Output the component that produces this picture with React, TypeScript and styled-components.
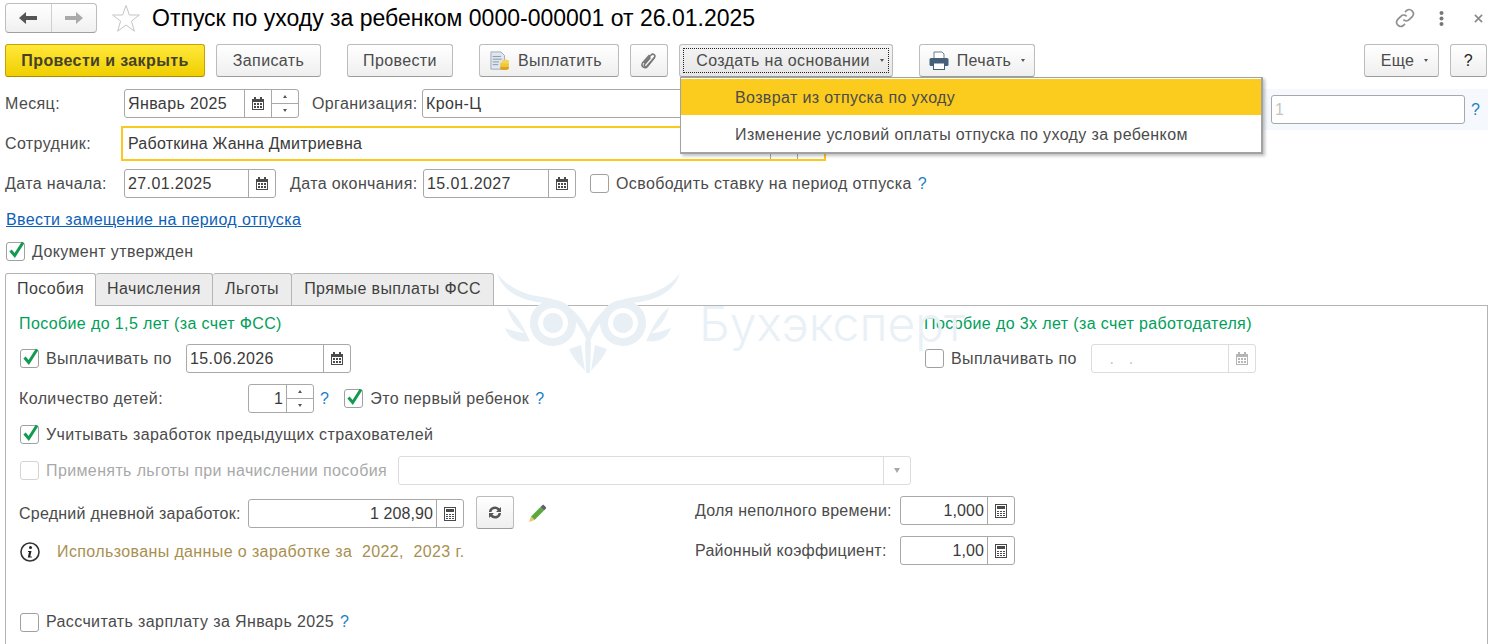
import React from "react";
import styled, { createGlobalStyle } from "styled-components";

const GlobalStyle = createGlobalStyle`
  html, body {
    margin: 0;
    padding: 0;
    background: #fff;
    overflow: hidden;
  }
  body {
    font-family: "Liberation Sans", Arial, sans-serif;
    font-size: 16px;
    letter-spacing: 0.38px;
    color: #4b4b4b;
  }
`;

const Page = styled.div`
  position: relative;
  width: 1494px;
  height: 644px;
  overflow: hidden;
  padding: 3px 6px 0 5px;
  box-sizing: border-box;
`;

const Header = styled.div`
  display: flex;
  align-items: center;
  height: 30px;
`;

const NavGroup = styled.div`
  display: flex;
  width: 92px;
  height: 30px;
  box-sizing: border-box;
  border: 1px solid #bdbdbd;
  border-bottom-color: #9f9f9f;
  border-radius: 4px;
  background: linear-gradient(#fff, #f0f0f0);
`;

const NavCell = styled.div<{ $divider?: boolean }>`
  flex: 1;
  display: flex;
  align-items: center;
  justify-content: center;
  border-right: ${(p) => (p.$divider ? "1px solid #cfcfcf" : "none")};
`;

const StarWrap = styled.div`
  display: flex;
  margin-left: 14px;
  width: 41px;
`;

const Title = styled.h1`
  margin: 0;
  font-size: 23px;
  font-weight: 400;
  letter-spacing: 0;
  color: #000;
  white-space: nowrap;
`;

const HeaderTools = styled.div`
  margin-left: auto;
  display: flex;
  align-items: center;
  gap: 24px;
  padding-right: 5px;
`;

const CloseIcon = styled.svg`
  margin-left: 6px;
`;

const Toolbar = styled.div`
  display: flex;
  margin-top: 11px;
  height: 33px;
`;

const Button = styled.div<{
  $w: number;
  $ml?: number;
  $pl?: number;
  $pr?: number;
  $primary?: boolean;
  $pressed?: boolean;
}>`
  position: relative;
  width: ${(p) => p.$w}px;
  margin-left: ${(p) => p.$ml ?? 0}px;
  padding: 0 ${(p) => p.$pr ?? 0}px 0 ${(p) => p.$pl ?? 0}px;
  height: 33px;
  box-sizing: border-box;
  display: flex;
  align-items: center;
  justify-content: center;
  gap: 8px;
  white-space: nowrap;
  border-radius: 3px;
  border: 1px solid ${(p) => (p.$primary ? "#c4a300" : "#bcbcbc")};
  border-bottom-color: ${(p) => (p.$primary ? "#a98e00" : "#9d9d9d")};
  background: ${(p) =>
    p.$primary
      ? "linear-gradient(#ffe83a, #f0cf00)"
      : p.$pressed
        ? "linear-gradient(#f4f4f4, #e6e6e6)"
        : "linear-gradient(#fff, #efefef)"};
  font-weight: ${(p) => (p.$primary ? 700 : 400)};
  color: ${(p) => (p.$primary ? "#45412a" : "#4b4b4b")};
`;

const HelpButton = styled(Button)`
  color: #222;
`;

const FocusFrame = styled.div`
  position: absolute;
  inset: 3px;
  border: 1px dotted #222;
`;

const Caret = styled.span<{ $ml?: number }>`
  width: 0;
  height: 0;
  margin-left: ${(p) => p.$ml ?? 0}px;
  border-left: 2.5px solid transparent;
  border-right: 2.5px solid transparent;
  border-top: 3px solid #555;
`;

const FadedCaret = styled.span`
  width: 0;
  height: 0;
  border-left: 3.5px solid transparent;
  border-right: 3.5px solid transparent;
  border-top: 5px solid #a8a8a8;
`;

const Row = styled.div<{ $h?: number; $mt?: number }>`
  display: flex;
  align-items: center;
  height: ${(p) => p.$h ?? 29}px;
  margin-top: ${(p) => p.$mt ?? 0}px;
  white-space: nowrap;
`;

const Label = styled.span<{
  $w?: number;
  $ml?: number;
  $disabled?: boolean;
  $tight?: boolean;
}>`
  flex: none;
  width: ${(p) => (p.$w ? `${p.$w}px` : "auto")};
  margin-left: ${(p) => p.$ml ?? 0}px;
  letter-spacing: ${(p) => (p.$tight ? "0.24px" : "inherit")};
  color: ${(p) => (p.$disabled ? "#a9a9a9" : "#4b4b4b")};
`;

const Field = styled.div<{ $w: number; $disabled?: boolean }>`
  flex: none;
  display: flex;
  width: ${(p) => p.$w}px;
  height: 29px;
  box-sizing: border-box;
  background: #fff;
  border: 1px solid ${(p) => (p.$disabled ? "#dcdcdc" : "#a8a8a8")};
  border-radius: 3px;
`;

const Value = styled.div<{ $right?: boolean; $muted?: boolean }>`
  flex: 1;
  min-width: 0;
  display: flex;
  align-items: center;
  justify-content: ${(p) => (p.$right ? "flex-end" : "flex-start")};
  padding: 0 3px;
  letter-spacing: ${(p) => (p.$right ? "0.1px" : "inherit")};
  color: ${(p) => (p.$muted ? "#c4c4c4" : "#3a3a3a")};
`;

const FieldBtn = styled.div<{ $w?: number; $disabled?: boolean }>`
  flex: none;
  width: ${(p) => p.$w ?? 26}px;
  display: flex;
  align-items: center;
  justify-content: center;
  border-left: 1px solid ${(p) => (p.$disabled ? "#dcdcdc" : "#a8a8a8")};
`;

const Spin = styled.div<{ $w?: number }>`
  flex: none;
  width: ${(p) => p.$w ?? 26}px;
  display: flex;
  flex-direction: column;
  border-left: 1px solid #a8a8a8;
`;

const SpinCell = styled.div<{ $top?: boolean }>`
  flex: 1;
  display: flex;
  align-items: center;
  justify-content: center;
  border-bottom: ${(p) => (p.$top ? "1px solid #a8a8a8" : "none")};
`;

const TinyUp = styled.span`
  width: 0;
  height: 0;
  border-left: 2px solid transparent;
  border-right: 2px solid transparent;
  border-bottom: 3px solid #555;
`;

const TinyDown = styled.span`
  width: 0;
  height: 0;
  border-left: 2px solid transparent;
  border-right: 2px solid transparent;
  border-top: 3px solid #555;
`;

const EmployeeField = styled.div`
  flex: none;
  display: flex;
  width: 705px;
  height: 35px;
  box-sizing: border-box;
  border: 2px solid #fbc91d;
`;

const EmployeeName = styled.div`
  flex: 1;
  display: flex;
  align-items: center;
  padding-left: 5px;
  letter-spacing: 0.23px;
  color: #3a3a3a;
`;

const CheckBox = styled.span<{ $ml?: number; $disabled?: boolean }>`
  flex: none;
  position: relative;
  width: 19px;
  height: 19px;
  margin-left: ${(p) => p.$ml ?? 0}px;
  margin-right: 7px;
  box-sizing: border-box;
  border: 1px solid ${(p) => (p.$disabled ? "#d4d4d4" : "#a0a0a0")};
  border-radius: 3px;
  background: #fff;
`;

const CheckMark = styled.svg`
  position: absolute;
  left: 1px;
  top: -3px;
`;

const Hint = styled.span<{ $ml?: number }>`
  margin-left: ${(p) => p.$ml ?? 6}px;
  color: #1b7fc4;
`;

const Link = styled.a`
  color: #0d5fb8;
  text-decoration: underline;
  margin-left: 1px;
`;

const SidePanel = styled.div`
  position: absolute;
  left: 1262px;
  top: 89px;
  width: 226px;
  height: 41px;
  background: #f5f8fc;
  display: flex;
  align-items: flex-start;
  padding: 6px 0 0 9px;
  box-sizing: border-box;
`;

const SideHint = styled(Hint)`
  line-height: 29px;
`;

const Tabs = styled.div`
  display: flex;
  margin-top: 11px;
  height: 33px;
  position: relative;
  z-index: 1;
`;

const Tab = styled.div<{ $w: number; $active?: boolean }>`
  width: ${(p) => p.$w}px;
  box-sizing: border-box;
  height: ${(p) => (p.$active ? 33 : 32)}px;
  padding-bottom: ${(p) => (p.$active ? 2 : 1)}px;
  display: flex;
  align-items: center;
  justify-content: center;
  white-space: nowrap;
  background: ${(p) => (p.$active ? "#fff" : "#ececec")};
  border: 1px solid #b4b4b4;
  border-left-width: ${(p) => (p.$active ? 1 : 0)}px;
  border-bottom: 0;
  border-radius: 3px 3px 0 0;
  color: #3f3f3f;
`;

const TabPanel = styled.div`
  margin-top: -1px;
  height: 360px;
  box-sizing: border-box;
  border: 1px solid #b4b4b4;
  padding: 8px 0 0 13px;
`;

const Columns = styled.div<{ $left: number }>`
  display: grid;
  grid-template-columns: ${(p) => p.$left}px 1fr;
`;

const Stack = styled.div`
  display: flex;
  flex-direction: column;
`;

const SectionTitle = styled.div`
  color: #00a05a;
  height: 18px;
  line-height: 20px;
  margin-bottom: 12px;
`;

const SquareButton = styled(Button)`
  align-self: flex-start;
`;

const PencilIcon = styled.svg`
  margin-left: 13px;
`;

const NoteIcon = styled.span`
  flex: none;
  display: flex;
  margin-left: 1px;
  margin-right: 17px;
`;

const Note = styled.span`
  color: #a98f4f;
`;

const Watermark = styled.div`
  position: absolute;
  left: 497px;
  top: 273px;
  display: flex;
  pointer-events: none;
  z-index: 0;
`;

const WatermarkText = styled.span`
  position: absolute;
  left: 202px;
  top: 21px;
  font-family: "Inter", sans-serif;
  font-size: 48px;
  font-weight: 300;
  line-height: 60px;
  color: #e9f1f7;
  letter-spacing: 0;
  white-space: nowrap;
`;

const Menu = styled.div`
  position: absolute;
  z-index: 3;
  left: 680px;
  top: 77px;
  width: 583px;
  height: 77px;
  box-sizing: border-box;
  background: #fff;
  border: 1px solid #a2a2a2;
  border-width: 1px 2px 2px 1px;
  box-shadow: 2px 2px 3px rgba(0, 0, 0, 0.25);
  padding-top: 1px;
`;

const MenuItem = styled.div<{ $active?: boolean }>`
  height: 36px;
  box-sizing: border-box;
  padding: 2px 0 0 54px;
  display: flex;
  align-items: center;
  background: ${(p) => (p.$active ? "#fbcc1d" : "transparent")};
  color: #4b4b4b;
  margin-bottom: ${(p) => (p.$active ? 1 : 0)}px;
`;

const CalendarIcon = ({ faded }: { faded?: boolean }) => (
  <svg width="12" height="13" viewBox="0 0 12 13" fill={faded ? "#b5b5b5" : "#4a4a4a"}>
    <path d="M2 0h2v2H2zM8 0h2v2H8z" />
    <path d="M0 2h12v11H0zM1 5v7h10V5z" fillRule="evenodd" />
    <path d="M2 6h2v2H2zM5 6h2v2H5zM8 6h2v2H8zM2 9h2v2H2zM5 9h2v2H5zM8 9h2v2H8z" />
  </svg>
);

const CalcIcon = () => (
  <svg width="12" height="14" viewBox="0 0 12 14" fill="#4a4a4a">
    <path d="M0 0h12v14H0zM1 1v12h10V1z" fillRule="evenodd" />
    <path d="M2 2h8v3H2zM2 7h2v1H2zM5 7h2v1H5zM8 7h2v1H8zM2 9h2v1H2zM5 9h2v1H5zM8 9h2v1H8zM2 11h2v1H2zM5 11h2v1H5zM8 11h2v1H8z" />
  </svg>
);

const Check = () => (
  <CheckMark width="18" height="19" viewBox="0 0 18 19">
    <path d="M2.5 10.5l4.2 5L15 2.5" fill="none" stroke="#119a50" strokeWidth="3" />
  </CheckMark>
);

const Owl = () => (
  <svg width="184" height="100" viewBox="0 0 184 100" fill="#e8f0f6">
    <path d="M0 0c10 14 28 22 46 24 24 3 40 18 48 42l-4 2C80 46 66 31 48 30 26 28 6 20 0 0z" />
    <path d="M183 0c-10 14-28 22-46 24-24 3-40 18-48 42l4 2c10-22 24-37 42-38 22-2 42-10 48-30z" />
    <path d="M10 34c3 12 9 20 18 26-6 0-12-2-20-5 3 10 13 15 25 13l-6-12c-4-8-9-15-17-22zM172 34c-3 12-9 20-18 26 6 0 12-2 20-5-3 10-13 15-25 13l6-12c4-8 9-15 17-22z" />
    <path
      fillRule="evenodd"
      d="M56 27a23 23 0 1 0 .01 0zM56 35a15 15 0 1 1-.01 0zM56 40a10 10 0 1 0 .01 0z"
    />
    <path
      fillRule="evenodd"
      d="M126 27a23 23 0 1 0 .01 0zM126 35a15 15 0 1 1-.01 0zM126 40a10 10 0 1 0 .01 0z"
    />
    <path d="M91 60l3 10-1 30h-4l-1-30z" />
    <path d="M84 72l4 26c-7-8-13-14-16-22 5-2 9-3 12-4zM98 72l-4 26c7-8 13-14 16-22-5-2-9-3-12-4z" />
  </svg>
);

export default function App() {
  return (
    <Page>
      <GlobalStyle />
      <Watermark>
        <Owl />
        <WatermarkText>Бухэксперт</WatermarkText>
      </Watermark>

      <Header>
        <NavGroup>
          <NavCell $divider>
            <svg width="18" height="12" viewBox="0 0 18 12" fill="#555">
              <path d="M7 0v4h11v4H7v4L0 6z" />
            </svg>
          </NavCell>
          <NavCell>
            <svg width="18" height="12" viewBox="0 0 18 12" fill="#aaa">
              <path d="M11 0v4H0v4h11v4l7-6z" />
            </svg>
          </NavCell>
        </NavGroup>
        <StarWrap>
          <svg width="30" height="29" viewBox="0 0 30 29" fill="none" stroke="#c4c4c4">
            <path d="M15 1.500l3.400 9.500h10l-8 6.200 3 10L15 21l-8.400 6.200 3-10-8-6.200h10z" />
          </svg>
        </StarWrap>
        <Title>Отпуск по уходу за ребенком 0000-000001 от 26.01.2025</Title>
        <HeaderTools>
          <svg width="20" height="20" viewBox="0 0 24 24" fill="none" stroke="#8f8f8f" strokeWidth="2">
            <path d="M10 14a5 5 0 0 0 7 0l4-4a5 5 0 0 0-7-7l-2 2" />
            <path d="M14 10a5 5 0 0 0-7 0l-4 4a5 5 0 0 0 7 7l2-2" />
          </svg>
          <svg width="5" height="15" viewBox="0 0 5 15" fill="#777">
            <circle cx="2.500" cy="2" r="2" />
            <circle cx="2.500" cy="7.500" r="2" />
            <circle cx="2.500" cy="13" r="2" />
          </svg>
          <CloseIcon width="9" height="9" viewBox="0 0 10 10" stroke="#8a8a8a" strokeWidth="1.800">
            <path d="M1 1l8 8M9 1l-8 8" />
          </CloseIcon>
        </HeaderTools>
      </Header>

      <Toolbar>
        <Button $w={200} $primary>Провести и закрыть</Button>
        <Button $w={105} $ml={11}>Записать</Button>
        <Button $w={106} $ml={26}>Провести</Button>
        <Button $w={140} $ml={26} $pr={6}>
          <svg width="20" height="20" viewBox="0 0 22 22">
            <path d="M1 1h11l4 4v15H1z" fill="#dfe6ee" stroke="#9aa6b2" />
            <path d="M3 6h9M3 9h10M3 12h7M3 15h6" stroke="#7f93a8" />
            <ellipse cx="16" cy="18.500" rx="5" ry="2.500" fill="#d9a520" />
            <ellipse cx="16" cy="15" rx="5" ry="2.500" fill="#f3c73b" />
            <ellipse cx="17" cy="11.500" rx="4" ry="2.200" fill="#f5d558" />
          </svg>
          Выплатить
        </Button>
        <Button $w={38} $ml={11}>
          <svg width="18" height="20" viewBox="0 0 18 20" fill="none" stroke="#777" strokeWidth="1.500">
            <path d="M4 12l7-8c2-2 5 0 3.500 2.500L7 15c-1.500 1.500-3.500 0-2.500-1.500l6-7" />
            <path d="M14.500 6.500l-7 9c-2.500 3-7 0-5-3.500l7-8" />
          </svg>
        </Button>
        <Button $w={214} $ml={11} $pl={8} $pressed>
          <FocusFrame />
          Создать на основании
          <Caret $ml={2} />
        </Button>
        <Button $w={116} $ml={26}>
          <svg width="20" height="19" viewBox="0 0 20 19">
            <path d="M5 1h8l2 2v5H5z" fill="#fff" stroke="#6b7c8e" />
            <rect x="0.500" y="7" width="19" height="8" rx="1.500" fill="#46607a" />
            <rect x="4.500" y="12" width="11" height="6.500" fill="#fff" stroke="#46607a" />
          </svg>
          Печать
          <Caret $ml={2} />
        </Button>
        <Button $w={75} $ml={329} $pl={6}>
          Еще
          <Caret $ml={2} />
        </Button>
        <HelpButton $w={37} $ml={11}>?</HelpButton>
      </Toolbar>

      <Row $mt={12}>
        <Label $w={119}>Месяц:</Label>
        <Field $w={175}>
          <Value>Январь 2025</Value>
          <FieldBtn><CalendarIcon /></FieldBtn>
          <Spin>
            <SpinCell $top><TinyUp /></SpinCell>
            <SpinCell><TinyDown /></SpinCell>
          </Spin>
        </Field>
        <Label $ml={13} $w={110}>Организация:</Label>
        <Field $w={400}>
          <Value>Крон-Ц</Value>
        </Field>
      </Row>
      <SidePanel>
        <Field $w={194}>
          <Value $muted>1</Value>
        </Field>
        <SideHint>?</SideHint>
      </SidePanel>

      <Row $h={35} $mt={8}>
        <Label $w={116}>Сотрудник:</Label>
        <EmployeeField>
          <EmployeeName>Работкина Жанна Дмитриевна</EmployeeName>
          <FieldBtn />
          <FieldBtn />
        </EmployeeField>
      </Row>

      <Row $mt={8}>
        <Label $w={119}>Дата начала:</Label>
        <Field $w={152}>
          <Value>27.01.2025</Value>
          <FieldBtn><CalendarIcon /></FieldBtn>
        </Field>
        <Label $ml={14} $w={133}>Дата окончания:</Label>
        <Field $w={153}>
          <Value>15.01.2027</Value>
          <FieldBtn><CalendarIcon /></FieldBtn>
        </Field>
        <CheckBox $ml={14} />
        <Label>Освободить ставку на период отпуска</Label>
        <Hint>?</Hint>
      </Row>

      <Row $h={19} $mt={12}>
        <Link>Ввести замещение на период отпуска</Link>
      </Row>

      <Row $h={21} $mt={12}>
        <CheckBox $ml={1}><Check /></CheckBox>
        <Label>Документ утвержден</Label>
      </Row>

      <Tabs>
        <Tab $w={91} $active>Пособия</Tab>
        <Tab $w={117}>Начисления</Tab>
        <Tab $w={79}>Льготы</Tab>
        <Tab $w={202}>Прямые выплаты ФСС</Tab>
      </Tabs>

      <TabPanel>
        <Columns $left={905}>
          <Stack>
            <SectionTitle>Пособие до 1,5 лет (за счет ФСС)</SectionTitle>
            <Row>
              <CheckBox $ml={1}><Check /></CheckBox>
              <Label $w={140}>Выплачивать по</Label>
              <Field $w={165}>
                <Value>15.06.2026</Value>
                <FieldBtn><CalendarIcon /></FieldBtn>
              </Field>
            </Row>
          </Stack>
          <Stack>
            <SectionTitle>Пособие до 3х лет (за счет работодателя)</SectionTitle>
            <Row>
              <CheckBox $ml={1} />
              <Label $w={140}>Выплачивать по</Label>
              <Field $w={165} $disabled>
                <Value $muted>&nbsp;&nbsp;&nbsp;.&nbsp;&nbsp;&nbsp;.</Value>
                <FieldBtn $disabled><CalendarIcon faded /></FieldBtn>
              </Field>
            </Row>
          </Stack>
        </Columns>

        <Row $mt={11}>
          <Label $w={229}>Количество детей:</Label>
          <Field $w={66}>
            <Value $right>1</Value>
            <Spin>
              <SpinCell $top><TinyUp /></SpinCell>
              <SpinCell><TinyDown /></SpinCell>
            </Spin>
          </Field>
          <Hint>?</Hint>
          <CheckBox $ml={15}><Check /></CheckBox>
          <Label>Это первый ребенок</Label>
          <Hint>?</Hint>
        </Row>

        <Row $h={21} $mt={11}>
          <CheckBox $ml={1}><Check /></CheckBox>
          <Label>Учитывать заработок предыдущих страхователей</Label>
        </Row>

        <Row $mt={11}>
          <CheckBox $ml={1} $disabled />
          <Label $disabled $w={352}>Применять льготы при начислении пособия</Label>
          <Field $w={513} $disabled>
            <Value />
            <FieldBtn $disabled>
              <FadedCaret />
            </FieldBtn>
          </Field>
        </Row>

        <Columns $left={676}>
          <Stack>
            <Row $h={35} $mt={11}>
              <Label $w={229} $tight>Средний дневной заработок:</Label>
              <Field $w={216}>
                <Value $right>1 208,90</Value>
                <FieldBtn><CalcIcon /></FieldBtn>
              </Field>
              <SquareButton $w={38} $ml={12}>
                <svg width="14" height="13" viewBox="0 0 14 13" fill="#555">
                  <path d="M1 6C1 2.500 4 .500 7 .500c2 0 3.500 1 4.500 2L13 1v5H8l1.600-1.600C9 3.500 8 3 7 3 5 3 3.700 4.300 3.500 6zM13 7c0 3.500-3 5.500-6 5.500-2 0-3.500-1-4.500-2L1 12V7h5L4.400 8.600C5 9.500 6 10 7 10c2 0 3.300-1.300 3.500-3z" />
                </svg>
              </SquareButton>
              <PencilIcon width="20" height="20" viewBox="0 0 20 20">
                <path d="M4 12.500L13.500 3l3.500 3.500L7.500 16z" fill="#5da83a" />
                <path d="M13.500 3L15 1.500c.800-.800 1.500-.800 2-.300l1.800 1.800c.500.500.500 1.200-.300 2L17 6.500z" fill="#5a6570" />
                <path d="M4 12.500L2 18l5.500-2z" fill="#e9c46a" />
              </PencilIcon>
            </Row>
            <Row $mt={6}>
              <NoteIcon>
                <svg width="20" height="20" viewBox="0 0 20 20">
                  <circle cx="10" cy="10" r="9" fill="#fff" stroke="#333" strokeWidth="1.600" />
                  <circle cx="10.500" cy="5.500" r="1.500" fill="#222" />
                  <path d="M8 9h3.500l-1.300 5.500h1.600v1H7.800l1.200-5.500H8z" fill="#222" />
                </svg>
              </NoteIcon>
              <Note>Использованы данные о заработке за&nbsp; 2022,&nbsp; 2023 г.</Note>
            </Row>
          </Stack>
          <Stack>
            <Row $mt={11}>
              <Label $w={205} $tight>Доля неполного времени:</Label>
              <Field $w={115}>
                <Value $right>1,000</Value>
                <FieldBtn><CalcIcon /></FieldBtn>
              </Field>
            </Row>
            <Row $mt={11}>
              <Label $w={205} $tight>Районный коэффициент:</Label>
              <Field $w={115}>
                <Value $right>1,00</Value>
                <FieldBtn><CalcIcon /></FieldBtn>
              </Field>
            </Row>
          </Stack>
        </Columns>

        <Row $h={20} $mt={46}>
          <CheckBox $ml={1} />
          <Label>Рассчитать зарплату за Январь 2025</Label>
          <Hint>?</Hint>
        </Row>
      </TabPanel>

      <Menu>
        <MenuItem $active>Возврат из отпуска по уходу</MenuItem>
        <MenuItem>Изменение условий оплаты отпуска по уходу за ребенком</MenuItem>
      </Menu>
    </Page>
  );
}
